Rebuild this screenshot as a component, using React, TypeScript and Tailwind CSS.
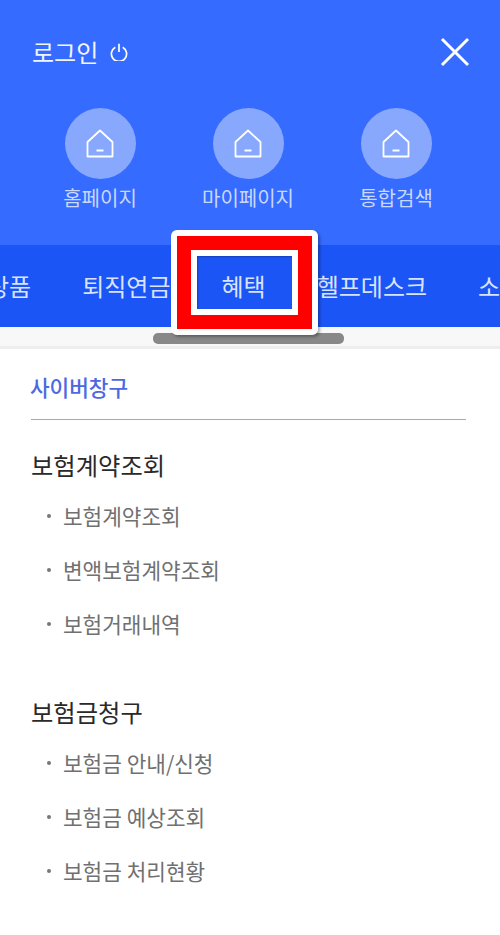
const font = "font-['Noto_Sans_CJK_KR','Noto_Sans',sans-serif]";

function HomeIcon() {
  return (
    <svg width="28" height="29" viewBox="0 0 28 29" fill="none" stroke="white" strokeWidth="1.8">
      <path d="M1.5 27.5V13L14 1.5L26.5 13V27.5Z" strokeLinejoin="round" />
      <path d="M10.5 21.5H17.5" strokeWidth="2" />
    </svg>
  );
}

function PowerIcon() {
  return (
    <svg width="18" height="18" viewBox="0 0 18 18" fill="none" stroke="white" strokeWidth="1.7">
      <path d="M5.3 4.2A7.6 7.6 0 1 0 12.7 4.2" />
      <path d="M9 0.8V9" />
    </svg>
  );
}

function Shortcut({ label }: { label: string }) {
  return (
    <div className="flex w-[148px] flex-col items-center">
      <div className="flex h-[71px] w-[71px] items-center justify-center rounded-full bg-[#88a8fd]">
        <HomeIcon />
      </div>
      <span className="mt-[4px] text-[20px] leading-[30px] font-normal whitespace-nowrap text-[#c9d8fe]">{label}</span>
    </div>
  );
}

function SubItem({ label }: { label: string }) {
  return (
    <li className="flex h-[54px] items-center text-[21.33px] font-normal text-[#707070]">
      <span className="mr-[12px] ml-[16px] h-[4px] w-[4px] rounded-full bg-[#777777]" />
      {label}
    </li>
  );
}

function Group({ title, items }: { title: string; items: string[] }) {
  return (
    <section>
      <h3 className="text-[24.3px] leading-[32px] font-normal text-[#2a2a2a]">{title}</h3>
      <ul className="mt-[8px]">
        {items.map((i) => (
          <SubItem key={i} label={i} />
        ))}
      </ul>
    </section>
  );
}

export default function App() {
  return (
    <div className={`${font} relative h-[935px] w-[500px] overflow-hidden bg-white`}>
      <header className="h-[245px] bg-[#366bff] pt-[34px]">
        <div className="flex h-[36px] items-center justify-between pr-[30px] pl-[32px]">
          <div className="flex items-center gap-[12px]">
            <span className="text-[24px] leading-[36px] font-normal text-[#f2f5ff]">로그인</span>
            <PowerIcon />
          </div>
          <svg width="30" height="30" viewBox="0 0 30 30" stroke="white" strokeWidth="3" fill="none">
            <path d="M2 2L28 28M28 2L2 28" />
          </svg>
        </div>
        <div className="mt-[38px] flex pl-[26px]">
          <Shortcut label="홈페이지" />
          <Shortcut label="마이페이지" />
          <Shortcut label="통합검색" />
        </div>
      </header>

      <nav className="flex h-[82px] items-center gap-[51px] overflow-hidden bg-[#1c55f6] text-[24px] font-normal whitespace-nowrap text-[#d9e3fe]">
        <span className="ml-[-13px]">상품</span>
        <span>퇴직연금</span>
        <span>혜택</span>
        <span>헬프데스크</span>
        <span>소비자</span>
      </nav>
      <div className="h-[22px] border-b-[3px] border-[#eeeeee] bg-[#f8f8f8]" />

      <main className="pr-[34px] pl-[31px]">
        <h2 className="flex h-[71px] items-center border-b border-[#aaaaaa] pt-[6px] text-[21.33px] font-medium text-[#4a69e2]">
          <span className="ml-[-1px]">사이버창구</span>
        </h2>
        <div className="mt-[29px]">
          <Group title="보험계약조회" items={["보험계약조회", "변액보험계약조회", "보험거래내역"]} />
        </div>
        <div className="mt-[45px]">
          <Group title="보험금청구" items={["보험금 안내/신청", "보험금 예상조회", "보험금 처리현황"]} />
        </div>
      </main>

      <div className="absolute top-[333px] left-[153px] h-[11px] w-[191px] rounded-[5px] bg-[#888888]" />
      <div className="absolute top-[230px] left-[171px] h-[105px] w-[147px] rounded-[6px] border-[6px] border-white shadow-[2px_2px_3px_rgba(0,0,0,0.3)]">
        <div className="h-full w-full border-[14px] border-[#ff0000]">
          <div className="h-full w-full border-[6px] border-white shadow-[inset_1px_1px_2px_rgba(0,0,0,0.25)]" />
        </div>
      </div>
    </div>
  );
}
